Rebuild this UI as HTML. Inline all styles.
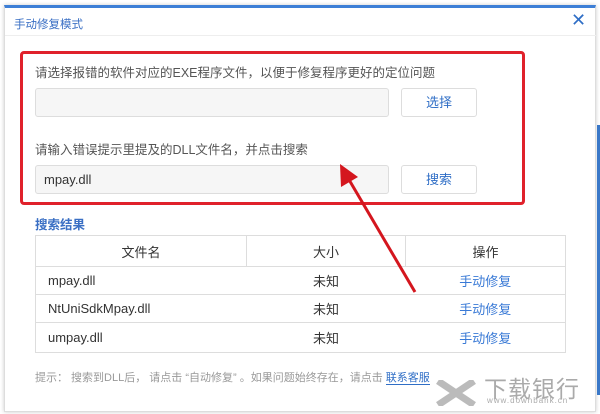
<!DOCTYPE html>
<html><head><meta charset="utf-8"><style>
body{margin:0;width:600px;height:414px;background:#fff;position:relative;overflow:hidden;font-family:"Liberation Sans","Noto Sans CJK SC",sans-serif;}
.a{position:absolute}
.dlg{left:4px;top:5px;width:590px;height:403px;background:#fff;border:1px solid #ddd;border-top:3px solid #3d7fd6;box-shadow:0 0 4px rgba(0,0,0,.2)}
.t{font-size:12px;color:#3a6fc4}
.lbl{font-size:12.5px;color:#555}
.inp{background:#f6f6f6;border:1px solid #ddd;border-radius:3px;height:29px;box-sizing:border-box;font-size:13px;color:#333;padding:6px 8px}
.btn{border:1px solid #ddd;border-radius:3px;width:76px;height:29px;box-sizing:border-box;text-align:center;line-height:27px;font-size:13px;color:#2f6ec6;background:#fff}
table{border-collapse:collapse;font-size:13px;color:#333;table-layout:fixed}
td{border:1px solid #ddd;height:27px;padding:0}
</style></head><body>
<div class="a dlg"></div>
<div class="a t" style="left:14px;top:16px;font-size:11.5px">手动修复模式</div>
<div class="a" style="left:571px;top:10px;font-size:18px;color:#2f6ec6">✕</div>
<div class="a" style="left:5px;top:35px;width:591px;height:1px;background:#eee"></div>
<div class="a" style="left:20px;top:51px;width:499px;height:148px;border:3px solid #e0212b;border-radius:4px"></div>
<div class="a lbl" style="left:35px;top:62px">请选择报错的软件对应的EXE程序文件，以便于修复程序更好的定位问题</div>
<div class="a inp" style="left:35px;top:88px;width:354px"></div>
<div class="a btn" style="left:401px;top:88px">选择</div>
<div class="a lbl" style="left:35px;top:139px">请输入错误提示里提及的DLL文件名，并点击搜索</div>
<div class="a inp" style="left:35px;top:165px;width:354px">mpay.dll</div>
<div class="a btn" style="left:401px;top:165px">搜索</div>
<div class="a t" style="left:35px;top:214px;font-size:12.5px;font-weight:bold">搜索结果</div>
<table class="a" style="left:35px;top:235px;width:531px">
<tr style="height:31px"><td style="width:210px;text-align:center">文件名</td><td style="width:158px;text-align:center">大小</td><td style="text-align:center">操作</td></tr>
<tr><td style="border-right:0;padding-left:12px">mpay.dll</td><td style="border-left:0;border-right:0;text-align:center">未知</td><td style="border-left:0;text-align:center;color:#3a7ad6">手动修复</td></tr>
<tr><td style="border-right:0;padding-left:12px">NtUniSdkMpay.dll</td><td style="border-left:0;border-right:0;text-align:center">未知</td><td style="border-left:0;text-align:center;color:#3a7ad6">手动修复</td></tr>
<tr style="height:30px"><td style="border-right:0;padding-left:12px">umpay.dll</td><td style="border-left:0;border-right:0;text-align:center">未知</td><td style="border-left:0;text-align:center;color:#3a7ad6">手动修复</td></tr>
</table>
<div class="a" style="left:35px;top:369px;font-size:11px;color:#999">提示： 搜索到DLL后， 请点击 “自动修复” 。如果问题始终存在，请点击 <span style="color:#2f6ec6;border-bottom:1px solid #2f6ec6">联系客服</span></div>
<svg class="a" style="left:436px;top:380px" width="40" height="26"><path d="M2 1 L38 25 M38 1 L2 25" stroke="#bbb" stroke-width="7"/></svg>
<div class="a" style="left:484px;top:370px;font-size:23px;color:#aaa;letter-spacing:1px">下载银行</div>
<div class="a" style="left:487px;top:396px;font-size:8px;color:#aaa;letter-spacing:1px">www.downbank.cn</div>
<div class="a" style="left:597px;top:125px;width:3px;height:270px;background:#3a78c8"></div>
<svg class="a" style="left:0;top:0" width="600" height="414"><line x1="415" y1="292" x2="348" y2="178" stroke="#d4161e" stroke-width="3"/><polygon points="340,164 341,187 358,177" fill="#d4161e"/></svg>
</body></html>
